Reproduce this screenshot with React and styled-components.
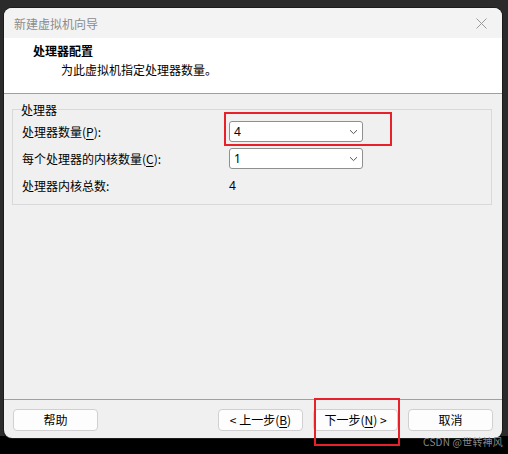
import React from 'react';
import styled, { createGlobalStyle } from 'styled-components';

const GlobalStyle = createGlobalStyle`
  html, body {
    margin: 0;
    padding: 0;
  }
  body {
    font-family: "Noto Sans CJK SC", "Liberation Sans", sans-serif;
    font-size: 12px;
    color: #000;
  }
`;

// fond ciemny za oknem
const Page = styled.div`
  position: relative;
  width: 508px;
  height: 454px;
  box-sizing: border-box;
  padding: 8px 6px 0 4px;
  background: linear-gradient(to bottom, #2b2b2b 0, #2b2b2b 436px, #000 436px);
  overflow: hidden;
`;

const Window = styled.div`
  width: 498px;
  height: 430px;
  display: flex;
  flex-direction: column;
  background: #f0f0f0;
  border-radius: 8px;
  box-shadow: 0 0 0 1px #1c1c1c;
`;

const TitleBar = styled.div`
  height: 30px;
  flex: none;
  display: flex;
  align-items: center;
  justify-content: space-between;
  padding: 0 10px 0 10px;
  background: #f3f3f3;
  border-radius: 8px 8px 0 0;
  color: #8c8c8c;
  font-size: 12px;
`;

const CloseButton = styled.div`
  width: 20px;
  height: 20px;
  display: flex;
  align-items: center;
  justify-content: center;
  margin-right: 1px;
`;

const Header = styled.div`
  height: 56px;
  flex: none;
  box-sizing: border-box;
  padding: 5px 0 0 29px;
  background: #fff;
  border-bottom: 1px solid #a0a0a0;
`;

const HeaderTitle = styled.div`
  font-weight: bold;
  line-height: 16px;
  height: 16px;
`;

const HeaderSubtitle = styled.div`
  padding-left: 28px;
  margin-top: 3px;
  line-height: 16px;
`;

const Content = styled.div`
  flex: 1;
  padding: 8px 10px 0 8px;
`;

const Group = styled.fieldset`
  margin: 0;
  height: 103px;
  box-sizing: border-box;
  padding: 5px 9px 0 9px;
  border: 1px solid #d9d9d9;
  border-radius: 0;
`;

const Legend = styled.legend`
  padding: 0 1px 0 0;
  margin-left: -1px;
  line-height: 14px;
  position: relative;
  top: 1px;
`;

const Rows = styled.div`
  display: grid;
  grid-template-columns: 207px 134px;
  grid-auto-rows: 21px;
  row-gap: 6px;
  align-items: center;
`;

const Label = styled.span`
  line-height: 16px;
`;

const Key = styled.span`
  text-decoration: underline;
  text-underline-offset: 2px;
`;

const ComboWrap = styled.div`
  position: relative;
  height: 21px;
`;

const Combo = styled.div`
  height: 21px;
  box-sizing: border-box;
  display: flex;
  align-items: center;
  justify-content: space-between;
  padding: 0 4px 0 4px;
  background: #fff;
  border: 1px solid #8f8f8f;
  border-radius: 3px;
`;

const Value = styled.span`
  font-family: "Noto Sans", "Liberation Sans", sans-serif;
`;

const Highlight = styled.div`
  position: absolute;
  box-sizing: border-box;
  border: 2px solid #e8202a;
  pointer-events: none;
  top: ${(p) => p.$top}px;
  left: ${(p) => p.$left}px;
  width: ${(p) => p.$w}px;
  height: ${(p) => p.$h}px;
`;

const Footer = styled.div`
  flex: none;
  display: flex;
  align-items: center;
  padding: 9px 9px 7px 9px;
  border-top: 1px solid #a0a0a0;
  gap: 10px;
`;

const Spacer = styled.div`
  flex: 1;
`;

const ButtonWrap = styled.div`
  position: relative;
`;

const Button = styled.button`
  width: 85px;
  height: 22px;
  box-sizing: border-box;
  padding: 0;
  background: #fdfdfd;
  border: 1px solid #d0d0d0;
  border-radius: 4px;
  font-family: inherit;
  font-size: 12px;
  color: #000;
  line-height: 18px;
`;

const Watermark = styled.div`
  position: absolute;
  right: 5px;
  top: 434px;
  font-size: 10px;
  color: #8a8a8a;
  letter-spacing: 0.2px;
`;

const Chevron = () => (
  <svg width="9" height="6" viewBox="0 0 9 6">
    <path d="M1 1.2 L4.5 4.6 L8 1.2" fill="none" stroke="#555" strokeWidth="1" />
  </svg>
);

const App = () => {
  return (
    <>
      <GlobalStyle />
      <Page>
        <Window>
          <TitleBar>
            <span>新建虚拟机向导</span>
            <CloseButton>
              <svg width="11" height="11" viewBox="0 0 11 11">
                <path d="M0.5 0.5 L10.5 10.5 M10.5 0.5 L0.5 10.5" stroke="#9a9a9a" strokeWidth="1" />
              </svg>
            </CloseButton>
          </TitleBar>
          <Header>
            <HeaderTitle>处理器配置</HeaderTitle>
            <HeaderSubtitle>为此虚拟机指定处理器数量。</HeaderSubtitle>
          </Header>
          <Content>
            <Group>
              <Legend>处理器</Legend>
              <Rows>
                <Label>
                  处理器数量(<Key>P</Key>):
                </Label>
                <ComboWrap>
                  <Combo>
                    <Value>4</Value>
                    <Chevron />
                  </Combo>
                  <Highlight $top={-9} $left={-5} $w={168} $h={34} />
                </ComboWrap>
                <Label>
                  每个处理器的内核数量(<Key>C</Key>):
                </Label>
                <ComboWrap>
                  <Combo>
                    <Value>1</Value>
                    <Chevron />
                  </Combo>
                </ComboWrap>
                <Label>处理器内核总数:</Label>
                <Value>4</Value>
              </Rows>
            </Group>
          </Content>
          <Footer>
            <Button>帮助</Button>
            <Spacer />
            <Button>
              &lt; 上一步(<Key>B</Key>)
            </Button>
            <ButtonWrap>
              <Button>
                下一步(<Key>N</Key>) &gt;
              </Button>
              <Highlight $top={-11} $left={1} $w={86} $h={48} />
            </ButtonWrap>
            <Button>取消</Button>
          </Footer>
        </Window>
        <Watermark>CSDN @世转神风</Watermark>
      </Page>
    </>
  );
};

export default App;
